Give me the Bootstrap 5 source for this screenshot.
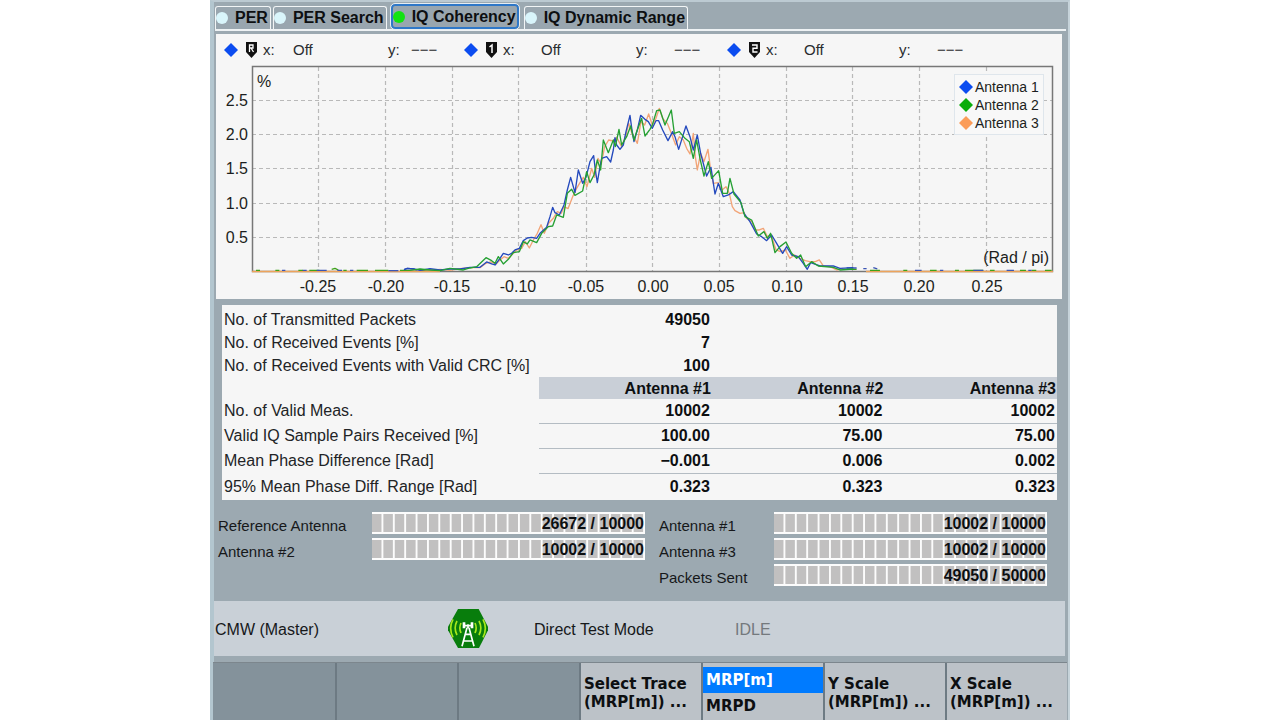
<!DOCTYPE html>
<html lang="en">
<head>
<meta charset="utf-8">
<meta name="viewport" content="width=device-width, initial-scale=1">
<title>IQ Coherency</title>
<link href="https://cdn.jsdelivr.net/npm/bootstrap@5.3.0/dist/css/bootstrap.min.css" rel="stylesheet">
<style>
  body { font: 16px/20px "Liberation Sans", Arial, sans-serif; color: #16181a; background: #fff; }
  .device { max-width: 860px; background: #9ca9b1; border-left: 4px solid #b3c6cf; border-right: 2px solid #c6d3da; border-top: 2px solid #bccad2; padding: 2px 2px 0 1px; }
  .tabstrip { height: 27px; gap: 2px; border-bottom: 2px solid #eef2f4; }
  .tab-key { height: 23px; gap: 7px; padding: 0 2px 0 0; border: 1px solid #f2f5f6; border-bottom: 0; border-radius: 3px 3px 0 0; background: #99a6af; font-size: 16px; line-height: 20px; font-weight: 700; color: #0d0f11; white-space: nowrap; }
  .tab-key.active { height: 25px; border: 2px solid #2f78c8; border-radius: 4px; padding: 0 1px 0 0; margin: 0 3px 0 2px; outline: 1px solid #e6edf2; }
  .led { width: 12px; height: 12px; border-radius: 50%; background: #d9f5fb; }
  .active .led { background: #12e312; }
  .chart-panel { background: #f6f6f6; margin: 3px 4px 0 1px; }
  .marker-row { height: 30px; padding: 2px 0 0 7px; font-size: 15px; color: #2a2c2e; }
  .marker-set { display: grid; grid-template-columns: 40px 38px 95px 38px auto; align-items: center; flex: 0 1 263px; }
  .marker-set.ref-set { grid-template-columns: 40px 30px 95px 23px auto; flex-basis: 240px; }
  .chart-panel text { font-family: "Liberation Sans", Arial, sans-serif; fill: #1c1e20; }
  .results { background: #f6f6f6; margin: 6px 9px 0 7px; padding: 3px 0 1px; }
  .results table { table-layout: fixed; width: 100%; border-collapse: separate; border-spacing: 0; }
  .results tr { height: 25px; }
  .results .summary-row { height: 23px; }
  .results .head-row { height: 22px; }
  .results th, .results td { padding: 0 2px; line-height: 20px; white-space: nowrap; }
  .results td, .head-row th { text-align: right; font-weight: 700; color: #0d0f11; }
  .results tbody th { font-weight: 400; color: #222426; }
  .results .head-row th { background: #c9cfd7; padding: 1px 1px 0 0; font-weight: 700; color: #0d0f11; }
  .ruled td { border-bottom: 1px solid #b4bcc3; }
  .ruled th { border-bottom: 1px solid transparent; }
  .label-col { width: 38%; }
  .counters { display: grid; grid-template-columns: 154fr 273fr 129fr 273fr; row-gap: 4px; padding: 12px 19px 15px 3px; font-size: 15px; }
  .counters .caption-text { padding-top: 4px; line-height: 20px; height: 22px; white-space: nowrap; }
  .counters .second { padding-left: 14px; }
  .meter { height: 22px; border: solid #fcfcfc; border-width: 2px 0; background: linear-gradient(90deg, #c1c0c0 80%, #fcfcfc 80%) 0 0 / calc(100% / 24) 100%; text-align: right; font-size: 16px; line-height: 19px; font-weight: 700; color: #0d0f11; padding-right: 1px; }
  .status-bar { display: grid; grid-template-columns: 233fr 86fr 201fr 330fr; height: 55px; align-items: center; background: #c9d0d7; margin: 0 1px 0 -1px; padding-left: 1px; }
  .status-bar span { padding-top: 2px; }
  .idle-state { color: #74797d; }
  .softkeys { display: grid; grid-template-columns: repeat(7, 1fr); margin: 6px -1px 0 -2px; height: 58px; border-top: 1px solid #7c868d; background: #84929b; }
  .softkey, .choice { font: 700 15px/18px "DejaVu Sans", Verdana, sans-serif; color: #0d0f11; background: #bcc2c8; text-align: left; white-space: nowrap; border: 0; }
  .softkey { padding: 2px 0 0 3px; }
  .choice { padding: 0 0 0 3px; height: 26px; }
  .choice.active { background: #007bff; color: #fff; }
  .choices { background: #bcc2c8; padding-top: 4px; }
  .softkeys > * + * { border-left: 2px solid #6d7a83; }
</style>
</head>
<body>
<main class="device mx-auto min-vh-100 d-flex flex-column">
  <nav class="tabstrip d-flex align-items-end" role="tablist">
    <button class="tab-key d-flex align-items-center" type="button" role="tab"><span class="led"></span>PER</button>
    <button class="tab-key d-flex align-items-center" type="button" role="tab"><span class="led"></span>PER Search</button>
    <button class="tab-key active d-flex align-items-center" type="button" role="tab" aria-selected="true"><span class="led"></span>IQ Coherency</button>
    <button class="tab-key d-flex align-items-center" type="button" role="tab"><span class="led"></span>IQ Dynamic Range</button>
  </nav>

  <section class="chart-panel">
    <div class="marker-row d-flex align-items-center">
      <div class="marker-set ref-set">
        <svg width="36" height="16" viewBox="0 0 36 16"><path d="M8 1l7 7-7 7-7-7z" fill="#0b4cf0"/><path d="M23 0h11v10l-5.500 6L23 10z" fill="#111"/><path d="M26.500 10V3h3.500v3h-3.500M28 6l2.500 4" fill="none" stroke="#fff" stroke-width="1.300"/></svg>
        <span>x:</span><span>Off</span><span>y:</span><span>−−−</span>
      </div>
      <div class="marker-set">
        <svg width="36" height="16" viewBox="0 0 36 16"><path d="M8 1l7 7-7 7-7-7z" fill="#0b4cf0"/><path d="M23 0h11v10l-5.500 6L23 10z" fill="#111"/><path d="M26.500 5L29 3v8" fill="none" stroke="#fff" stroke-width="1.500"/></svg>
        <span>x:</span><span>Off</span><span>y:</span><span>−−−</span>
      </div>
      <div class="marker-set">
        <svg width="36" height="16" viewBox="0 0 36 16"><path d="M8 1l7 7-7 7-7-7z" fill="#0b4cf0"/><path d="M23 0h11v10l-5.500 6L23 10z" fill="#111"/><path d="M26 3h5v3.200h-4V10h4.500" fill="none" stroke="#fff" stroke-width="1.400"/></svg>
        <span>x:</span><span>Off</span><span>y:</span><span>−−−</span>
      </div>
    </div>
    <svg class="d-block w-100" viewBox="0 0 846 235" role="img" aria-label="Phase difference distribution for three antennas">
      <g stroke="#b9b9b9" stroke-width="1.200" stroke-dasharray="4 3">
        <path d="M36 36.500H837M36 70.500H837M36 104.500H837M36 139.500H837M36 173.500H837"/>
        <path d="M102.500 3V207M169.500 3V207M236.500 3V207M302.500 3V207M370.500 3V207M436.500 3V207M503.500 3V207M570.500 3V207M636.500 3V207M703.500 3V207M770.500 3V207"/>
      </g>
      <rect x="36.500" y="2.500" width="800" height="205" fill="none" stroke="#777" stroke-width="1.500"/>
      <path d="M36 207.500H224M650 207.500H837" stroke="#eda45c" stroke-width="1.300"/>
      <g fill="none" stroke-linejoin="round" transform="translate(224 26) scale(.3333)">
        <g stroke="#3ea21a" stroke-width="4">
          <path d="M-552 541h12M-494 541h12M-425 541h14M-392 541h30M-325 538l10-3 10 5M-290 541h10M-250 541h34M-195 541h40M-120 541h30M-60 541h40M1210 538h40M1290 541h30M1390 541h12M1470 541h20M1545 541h12M1575 541h55M1650 541h14M1740 541h18M1775 541h14M1815 541h20"/>
        </g>
        <g stroke="#3c55b4" stroke-width="4">
          <path d="M-474 541h10M-412 541h12M-370 541h30M-308 541h14M-270 541h10M-155 542h30M-108 539l10-4 20 2 8 4M-40 540h30M1220 534h30M1270 536h10M1300 533l12 4M1425 541h20M1500 541h10M1600 541h30M1700 541h22M1765 541h10"/>
        </g>
        <g stroke-width="4">
        <polyline stroke="#f2a477" points="-90,541 -60,538 -30,541 0,538 30,541 60,536 90,533 120,533 138,520 152,516 168,522 180,510 192,500 205,505 218,492 230,480 245,475 256,455 268,474 280,450 292,430 303,404 313,430 326,400 340,385 352,365 364,370 372,350 384,356 398,320 410,295 420,278 430,262 441,290 455,235 464,262 474,205 484,222 494,170 506,150 520,153 530,142 545,170 558,135 566,100 576,130 592,160 603,95 614,105 626,72 637,105 648,85 658,55 668,85 682,100 694,130 707,165 718,140 730,150 740,175 750,192 760,130 766,200 772,240 782,190 792,215 804,178 812,240 820,280 834,278 846,300 858,290 868,310 877,350 885,362 900,370 912,368 920,385 936,395 946,420 958,420 970,415 982,440 994,435 1008,480 1022,485 1036,480 1050,505 1064,495 1080,505 1096,512 1110,515 1126,515 1138,510 1150,528 1170,530 1190,540 1210,535"/>
        <polyline stroke="#2449bd" points="-108,539 -98,535 -78,537 -60,541 -30,536 0,540 30,537 60,537 90,532 120,532 140,516 155,522 165,525 180,505 190,490 205,495 215,490 225,480 238,475 250,452 262,444 275,442 290,445 300,430 320,412 330,380 338,352 345,368 358,375 372,345 382,300 392,262 400,290 405,308 415,240 428,280 438,262 450,215 461,197 466,240 472,278 480,230 485,205 500,200 512,216 520,180 525,143 530,165 540,178 550,165 558,125 570,76 576,120 582,155 592,120 602,76 615,88 625,95 637,115 648,92 656,92 668,120 684,152 698,125 705,140 716,178 728,140 738,108 750,140 760,180 772,135 782,190 800,258 813,232 825,312 835,280 850,320 865,315 880,305 900,330 912,370 930,395 950,432 965,440 980,452 995,435 1010,460 1028,490 1040,470 1055,495 1075,500 1090,520 1102,538 1112,518 1140,528 1180,528 1200,535 1240,533"/>
        <polyline stroke="#25a033" points="-90,541 -60,537 -30,540 0,542 30,535 70,540 90,534 110,530 138,503 155,512 165,520 175,500 190,522 205,508 220,488 238,485 250,455 262,462 270,450 290,458 305,430 325,410 338,408 350,375 370,382 382,310 395,298 405,316 428,303 440,245 450,278 462,255 472,210 482,240 490,150 505,188 520,150 526,170 537,118 545,165 560,140 572,108 582,150 590,125 605,85 615,138 630,118 637,105 650,62 660,60 675,105 694,60 703,130 718,125 735,145 748,155 760,205 770,150 780,205 792,258 805,215 815,265 836,242 848,310 862,310 870,265 882,312 903,338 915,380 935,390 955,438 972,425 982,445 992,430 1005,488 1020,470 1038,456 1055,490 1070,505 1082,495 1097,530 1115,515 1135,528 1180,532 1200,540 1240,537"/>
        </g>
      </g>
      <g font-size="16">
        <text x="41" y="23">%</text>
        <text x="833" y="199" text-anchor="end">(Rad / pi)</text>
        <g text-anchor="end"><text x="32" y="42">2.5</text><text x="32" y="76">2.0</text><text x="32" y="110">1.5</text><text x="32" y="145">1.0</text><text x="32" y="179">0.5</text></g>
        <g text-anchor="middle"><text x="102" y="228">-0.25</text><text x="170" y="228">-0.20</text><text x="236" y="228">-0.15</text><text x="302" y="228">-0.10</text><text x="370" y="228">-0.05</text><text x="437" y="228">0.00</text><text x="503" y="228">0.05</text><text x="571" y="228">0.10</text><text x="637" y="228">0.15</text><text x="703" y="228">0.20</text><text x="771" y="228">0.25</text></g>
      </g>
      <rect x="738.500" y="10.500" width="89" height="60" fill="#f8f8f8" stroke="#dfe6ec"/>
      <path d="M750 16l7 7-7 7-7-7z" fill="#0b4cf0"/><path d="M750 34l7 7-7 7-7-7z" fill="#0aac0a"/><path d="M750 52l7 7-7 7-7-7z" fill="#fb9c58"/>
      <g font-size="14"><text x="759" y="28">Antenna 1</text><text x="759" y="46">Antenna 2</text><text x="759" y="64">Antenna 3</text></g>
    </svg>
  </section>

  <section class="results">
    <table>
      <colgroup><col class="label-col"><col><col><col></colgroup>
      <tbody>
        <tr class="summary-row"><th scope="row">No. of Transmitted Packets</th><td>49050</td><td></td><td></td></tr>
        <tr class="summary-row"><th scope="row">No. of Received Events [%]</th><td>7</td><td></td><td></td></tr>
        <tr class="summary-row"><th scope="row">No. of Received Events with Valid CRC [%]</th><td>100</td><td></td><td></td></tr>
      </tbody>
      <tbody>
        <tr class="head-row"><td></td><th scope="col">Antenna #1</th><th scope="col">Antenna #2</th><th scope="col">Antenna #3</th></tr>
        <tr class="ruled"><th scope="row">No. of Valid Meas.</th><td>10002</td><td>10002</td><td>10002</td></tr>
        <tr class="ruled"><th scope="row">Valid IQ Sample Pairs Received [%]</th><td>100.00</td><td>75.00</td><td>75.00</td></tr>
        <tr class="ruled"><th scope="row">Mean Phase Difference [Rad]</th><td>−0.001</td><td>0.006</td><td>0.002</td></tr>
        <tr><th scope="row">95% Mean Phase Diff. Range [Rad]</th><td>0.323</td><td>0.323</td><td>0.323</td></tr>
      </tbody>
    </table>
  </section>

  <section class="counters">
    <span class="caption-text">Reference Antenna</span><div class="meter">26672 / 10000</div>
    <span class="caption-text second">Antenna #1</span><div class="meter">10002 / 10000</div>
    <span class="caption-text">Antenna #2</span><div class="meter">10002 / 10000</div>
    <span class="caption-text second">Antenna #3</span><div class="meter">10002 / 10000</div>
    <span></span><span></span>
    <span class="caption-text second">Packets Sent</span><div class="meter">49050 / 50000</div>
  </section>

  <section class="status-bar">
    <span>CMW (Master)</span>
    <svg width="40" height="39" viewBox="0 0 120 117" aria-hidden="true">
      <path d="M30 0H92L120 53V64L93 117H30L0 64V53z" fill="#087d0c"/>
      <g fill="none" stroke="#a5e81c" stroke-width="5"><path d="M39 42q-7 15 0 30M27 36q-11 21 0 42M15 31q-14 27 0 54M81 42q7 15 0 30M93 36q11 21 0 42M105 31q14 27 0 54"/></g>
      <g fill="none" stroke="#fff" stroke-width="5"><path d="M57 56L42 112M63 56L78 112M52 76h16M47 96h26M60 46v12M48 50h24"/><path d="M48 40v18M72 40v18" stroke-width="8"/></g>
    </svg>
    <span>Direct Test Mode</span>
    <span class="idle-state">IDLE</span>
  </section>

  <footer class="softkeys">
    <span></span><span></span><span></span>
    <button class="softkey" type="button">Select Trace<br>(MRP[m]) ...</button>
    <div class="choices d-flex flex-column">
      <button class="choice active" type="button" aria-pressed="true">MRP[m]</button>
      <button class="choice" type="button" aria-pressed="false">MRPD</button>
    </div>
    <button class="softkey" type="button">Y Scale<br>(MRP[m]) ...</button>
    <button class="softkey" type="button">X Scale<br>(MRP[m]) ...</button>
  </footer>
</main>
<script src="https://cdn.jsdelivr.net/npm/bootstrap@5.3.0/dist/js/bootstrap.bundle.min.js"></script>
</body>
</html>
